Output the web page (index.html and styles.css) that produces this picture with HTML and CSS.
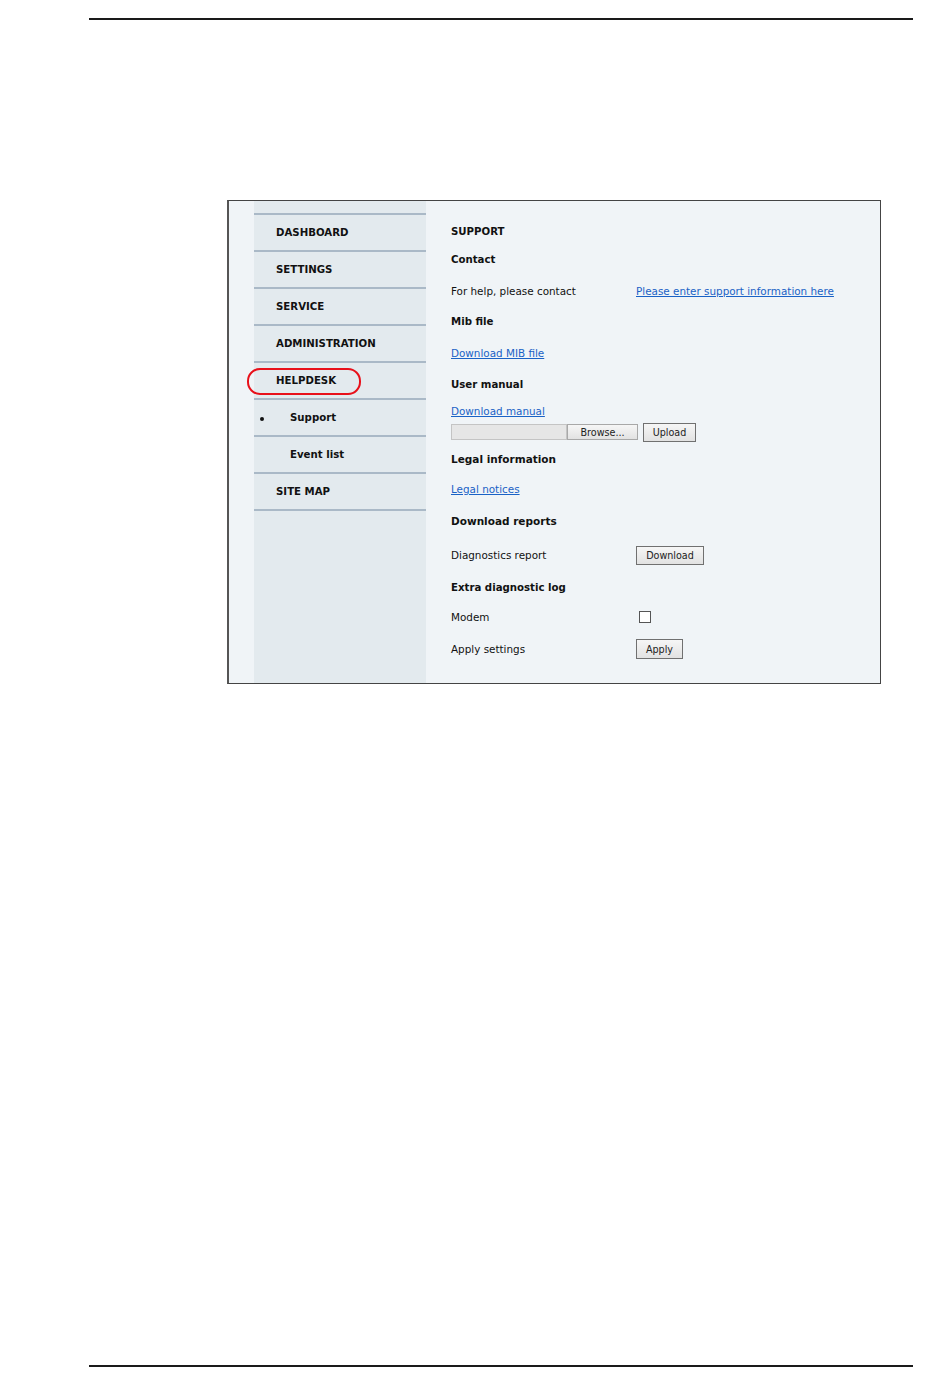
FILE: index.html
```html
<!DOCTYPE html>
<html lang="en">
<head>
    <meta charset="UTF-8">
    <meta name="viewport" content="width=device-width, initial-scale=1.0">
    <title>Helpdesk - Support</title>
    <link rel="stylesheet" href="styles.css">
</head>
<body>
    <!-- Page rule at the top -->
    <div class="page-rule top-rule"></div>

    <!-- Screenshot of the web interface -->
    <div class="screen">
        <div class="nav">
            <div class="nav-item">DASHBOARD</div>
            <div class="nav-item">SETTINGS</div>
            <div class="nav-item">SERVICE</div>
            <div class="nav-item">ADMINISTRATION</div>
            <div class="nav-item">HELPDESK</div>
            <div class="nav-item sub active"><span class="bullet"></span>Support</div>
            <div class="nav-item sub">Event list</div>
            <div class="nav-item last">SITE MAP</div>
            <div class="callout"></div>
        </div>

        <div class="content">
            <div class="row"><span class="head">SUPPORT</span></div>
            <div class="row m8"><span class="head">Contact</span></div>
            <div class="row m12">
                <span class="label">For help, please contact</span>
                <a href="#" class="link">Please enter support information here</a>
            </div>
            <div class="row m10"><span class="head">Mib file</span></div>
            <div class="row m12"><a href="#" class="link">Download MIB file</a></div>
            <div class="row m11"><span class="head">User manual</span></div>
            <div class="row m7"><a href="#" class="link">Download manual</a></div>
            <div class="row file-row">
                <span class="file-box"></span>
                <button class="btn browse">Browse...</button>
                <button class="btn upload">Upload</button>
            </div>
            <div class="row m7"><span class="head big">Legal information</span></div>
            <div class="row m10"><a href="#" class="link">Legal notices</a></div>
            <div class="row m12"><span class="head big">Download reports</span></div>
            <div class="row m14">
                <span class="label">Diagnostics report</span>
                <button class="btn download">Download</button>
            </div>
            <div class="row m12"><span class="head">Extra diagnostic log</span></div>
            <div class="row m10">
                <span class="label">Modem</span>
                <input type="checkbox" class="check">
            </div>
            <div class="row m12">
                <span class="label">Apply settings</span>
                <button class="btn apply">Apply</button>
            </div>
        </div>
    </div>

    <!-- Page rule at the bottom -->
    <div class="page-rule bottom-rule"></div>
</body>
</html>
```

FILE: styles.css
```css
/* Page */
body {
    margin: 0;
    padding: 0;
    background-color: #ffffff;
    font-family: "DejaVu Sans", Verdana, sans-serif;
    font-size: 10.4px;
    color: #111111;
    height: 100vh;
    display: flex;
    flex-direction: column;
}

.page-rule {
    margin-left: 89px;
    width: 824px;
    height: 0;
    border-top: 2px solid #1a1a1a;
}

.top-rule {
    margin-top: 18px;
}

.bottom-rule {
    margin-top: auto;
    margin-bottom: 31px;
}

/* Screenshot frame */
.screen {
    margin-top: 180px;
    margin-left: 227px;
    width: 626px;
    height: 482px;
    border: 1px solid #444444;
    border-left: 2px solid #555555;
    background-color: #f0f4f7;
    padding-left: 25px;
    display: flex;
}

/* Left navigation */
.nav {
    position: relative;
    width: 172px;
    background-color: #e3eaee;
    padding-top: 12px;
    flex-shrink: 0;
}

.nav-item {
    height: 34px;
    line-height: 34px;
    padding-top: 1px;
    border-top: 2px solid #aab9c7;
    padding-left: 22px;
    font-weight: bold;
    font-size: 10.2px;
    color: #111111;
    position: relative;
}

.nav-item.last {
    border-bottom: 2px solid #aab9c7;
}

.nav-item.sub {
    padding-left: 36px;
}

.bullet {
    position: absolute;
    left: 6px;
    top: 17px;
    width: 4px;
    height: 4px;
    border-radius: 50%;
    background-color: #111111;
}

.callout {
    position: absolute;
    left: -7px;
    top: 167px;
    width: 110px;
    height: 23px;
    border: 2px solid #e8101a;
    border-radius: 13px;
}

/* Content */
.content {
    flex-grow: 1;
    padding-left: 25px;
    padding-top: 20px;
}

.row {
    height: 20px;
    display: flex;
    align-items: center;
}

.m7 { margin-top: 7px; }
.m8 { margin-top: 8px; }
.m10 { margin-top: 10px; }
.m11 { margin-top: 11px; }
.m12 { margin-top: 12px; }
.m14 { margin-top: 14px; }

.file-row {
    margin-top: 1px;
}

.head {
    font-weight: bold;
    font-size: 10.2px;
}

.head.big {
    font-size: 10.5px;
}

.label {
    width: 185px;
    flex-shrink: 0;
}

.link {
    color: #1a62c6;
    text-decoration: underline;
}

/* Form controls */
.file-box {
    width: 114px;
    height: 14px;
    border: 1px solid #c4c4c4;
    background-color: #e6e6e6;
}

.btn {
    font-family: "DejaVu Sans", Verdana, sans-serif;
    font-size: 9.6px;
    color: #222222;
    background: linear-gradient(#f6f6f6, #e2e2e2);
    border: 1px solid #707070;
    padding: 0;
    margin: 0;
}

.browse {
    width: 71px;
    height: 16px;
    border-color: #a8a8a8;
}

.upload {
    width: 53px;
    height: 19px;
    margin-left: 5px;
}

.download {
    width: 68px;
    height: 19px;
}

.apply {
    width: 47px;
    height: 20px;
}

.check {
    appearance: none;
    width: 12px;
    height: 12px;
    margin: 0 0 0 3px;
    border: 1px solid #555555;
    background-color: #ffffff;
}
```
